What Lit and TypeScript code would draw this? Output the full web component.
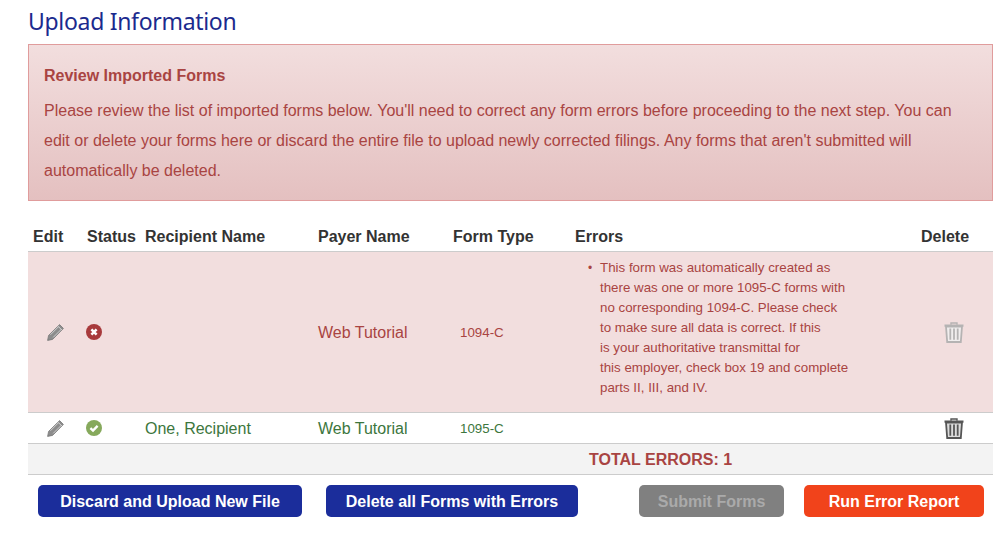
import { LitElement, html, css } from "lit";
import { customElement } from "lit/decorators.js";

const pencil = html`<svg width="17" height="17" viewBox="0 0 17 17"><path d="M12.6 .6 L16.4 4.4 L5.6 15.4 L.6 16.4 L1.6 11.4 Z" fill="#8c8c8c" stroke="#777" stroke-width=".8" stroke-linejoin="round"/><path d="M3.4 10.8 L11.6 2.6 M6.2 13.4 L14.4 5.2" stroke="#cfcfcf" stroke-width="1"/><path d="M11 2.2 L14.8 6" stroke="#e4e4e4" stroke-width=".8"/></svg>`;

const errIcon = html`<svg width="16" height="16" viewBox="0 0 16 16"><circle cx="8" cy="8" r="8" fill="#a83a3c"/><path d="M5.4 5.4 L10.6 10.6 M10.6 5.4 L5.4 10.6" stroke="#fff" stroke-width="2.6"/></svg>`;

const okIcon = html`<svg width="16" height="16" viewBox="0 0 16 16"><circle cx="8" cy="8" r="8" fill="#86a95c"/><path d="M4.4 8.2 L7 10.6 L11.6 5.8" fill="none" stroke="#fff" stroke-width="2.4"/></svg>`;

const trash = (cls: string) => html`<svg class=${cls} width="20" height="21" viewBox="0 0 20 21">
  <path d="M7 2.8 V1 H13 V2.8" fill="none" stroke="currentColor" stroke-width="1.4"/>
  <rect x="0.5" y="2.5" width="19" height="2.2" fill="currentColor"/>
  <path d="M2 4.5 L3.2 20 H16.8 L18 4.5 Z" fill="var(--trash-fill)" stroke="currentColor" stroke-width="1.8"/>
  <path d="M6.3 6.5 V17.8 M10 6.5 V17.8 M13.7 6.5 V17.8" stroke="currentColor" stroke-width="1.8"/>
</svg>`;

@customElement("app-root")
export class AppRoot extends LitElement {
  static styles = css`
    :host {
      display: block;
      width: 1008px;
      height: 544px;
      box-sizing: border-box;
      padding: 0 15px 0 28px;
      background: #fff;
      font-family: "Liberation Sans", Arial, sans-serif;
      font-size: 16px;
      overflow: hidden;
    }
    h1 {
      margin: 0;
      height: 44px;
      padding-top: 7px;
      box-sizing: border-box;
      font: 400 23px/28px "Noto Sans", "DejaVu Sans", sans-serif;
      letter-spacing: -0.31px;
      color: #1b2a8e;
    }
    .alert {
      box-sizing: border-box;
      height: 157px;
      padding: 16px 15px 0;
      border: 1px solid #e09c9c;
      background: linear-gradient(#f2dede, #e4c0c0);
      color: #a94442;
      line-height: 30px;
    }
    .alert h2 {
      margin: 0 0 5px;
      font-size: 16px;
      line-height: 30px;
      font-weight: 700;
    }
    .alert p {
      margin: 0;
    }
    table {
      margin-top: 21px;
      width: 965px;
      border-collapse: collapse;
      table-layout: fixed;
    }
    th {
      height: 29px;
      padding: 0 0 0 5px;
      text-align: left;
      font-weight: 700;
      color: #333;
      border-bottom: 1px solid #ccc;
    }
    td {
      padding: 2px 0 0 5px;
      border-bottom: 1px solid #ccc;
      vertical-align: middle;
    }
    tr.bad {
      height: 161px;
    }
    tr.bad td {
      background: #f2dede;
      color: #a94442;
    }
    tr.good {
      height: 31px;
    }
    tr.good td {
      color: #3c763d;
    }
    tr.total {
      height: 31px;
    }
    tr.total td {
      background: #f3f3f3;
      color: #a94442;
      font-weight: 700;
      padding-left: 561px;
    }
    td.ic {
      padding: 0;
    }
    .cell-ic {
      display: flex;
      align-items: center;
      justify-content: center;
    }
    .edit-ic { width: 54px; }
    .status-ic { width: 24px; }
    .del-ic { width: 76px; }
    td.ftype {
      font-size: 13.33px;
      padding: 0 0 0 12px;
    }
    td.err {
      padding-top: 0;
    }
    ul {
      margin: 0;
      padding: 0 0 8px 25px;
      list-style: none;
      font-size: 13.33px;
      line-height: 20px;
      position: relative;
    }
    ul li::before {
      content: "•";
      position: absolute;
      left: 13px;
      font-size: 12px;
    }
    .muted {
      color: #b5b3b3;
      --trash-fill: #f1eeee;
    }
    .dark {
      color: #565656;
      --trash-fill: #dcdcdc;
    }
    .actions {
      display: flex;
      margin-top: 10px;
      padding: 0 9px 0 10px;
    }
    button {
      height: 32px;
      padding: 2px 0 0;
      border: 1px solid transparent;
      border-radius: 5px;
      color: #fff;
      font: 700 16px "Liberation Sans", Arial, sans-serif;
    }
    .navy { background: #1b2d9b; }
    .b1 { width: 264px; margin-right: 24px; }
    .b2 { width: 252px; margin-right: 61px; }
    .grey { width: 145px; background: #808080; color: #aaa; margin-right: 20px; }
    .red { width: 180px; background: #f1431b; }
  `;

  render() {
    return html`
      <h1>Upload Information</h1>
      <div class="alert">
        <h2>Review Imported Forms</h2>
        <p>Please review the list of imported forms below. You'll need to correct any form errors before proceeding to the next step. You can edit or delete your forms here or discard the entire file to upload newly corrected filings. Any forms that aren't submitted will automatically be deleted.</p>
      </div>
      <table>
        <colgroup>
          <col style="width:54px" /><col style="width:58px" /><col style="width:173px" /><col style="width:135px" /><col style="width:122px" /><col style="width:346px" /><col style="width:77px" />
        </colgroup>
        <thead>
          <tr><th>Edit</th><th>Status</th><th>Recipient Name</th><th>Payer Name</th><th>Form Type</th><th>Errors</th><th>Delete</th></tr>
        </thead>
        <tbody>
          <tr class="bad">
            <td class="ic"><div class="cell-ic edit-ic">${pencil}</div></td>
            <td class="ic"><div class="cell-ic status-ic">${errIcon}</div></td>
            <td></td>
            <td>Web Tutorial</td>
            <td class="ftype">1094-C</td>
            <td class="err">
              <ul><li>This form was automatically created as<br />there was one or more 1095-C forms with<br />no corresponding 1094-C. Please check<br />to make sure all data is correct. If this<br />is your authoritative transmittal for<br />this employer, check box 19 and complete<br />parts II, III, and IV.</li></ul>
            </td>
            <td class="ic"><div class="cell-ic del-ic">${trash("muted")}</div></td>
          </tr>
          <tr class="good">
            <td class="ic"><div class="cell-ic edit-ic">${pencil}</div></td>
            <td class="ic"><div class="cell-ic status-ic">${okIcon}</div></td>
            <td>One, Recipient</td>
            <td>Web Tutorial</td>
            <td class="ftype">1095-C</td>
            <td></td>
            <td class="ic"><div class="cell-ic del-ic">${trash("dark")}</div></td>
          </tr>
          <tr class="total"><td colspan="7">TOTAL ERRORS: 1</td></tr>
        </tbody>
      </table>
      <div class="actions">
        <button class="navy b1">Discard and Upload New File</button>
        <button class="navy b2">Delete all Forms with Errors</button>
        <button class="grey">Submit Forms</button>
        <button class="red">Run Error Report</button>
      </div>
    `;
  }
}
